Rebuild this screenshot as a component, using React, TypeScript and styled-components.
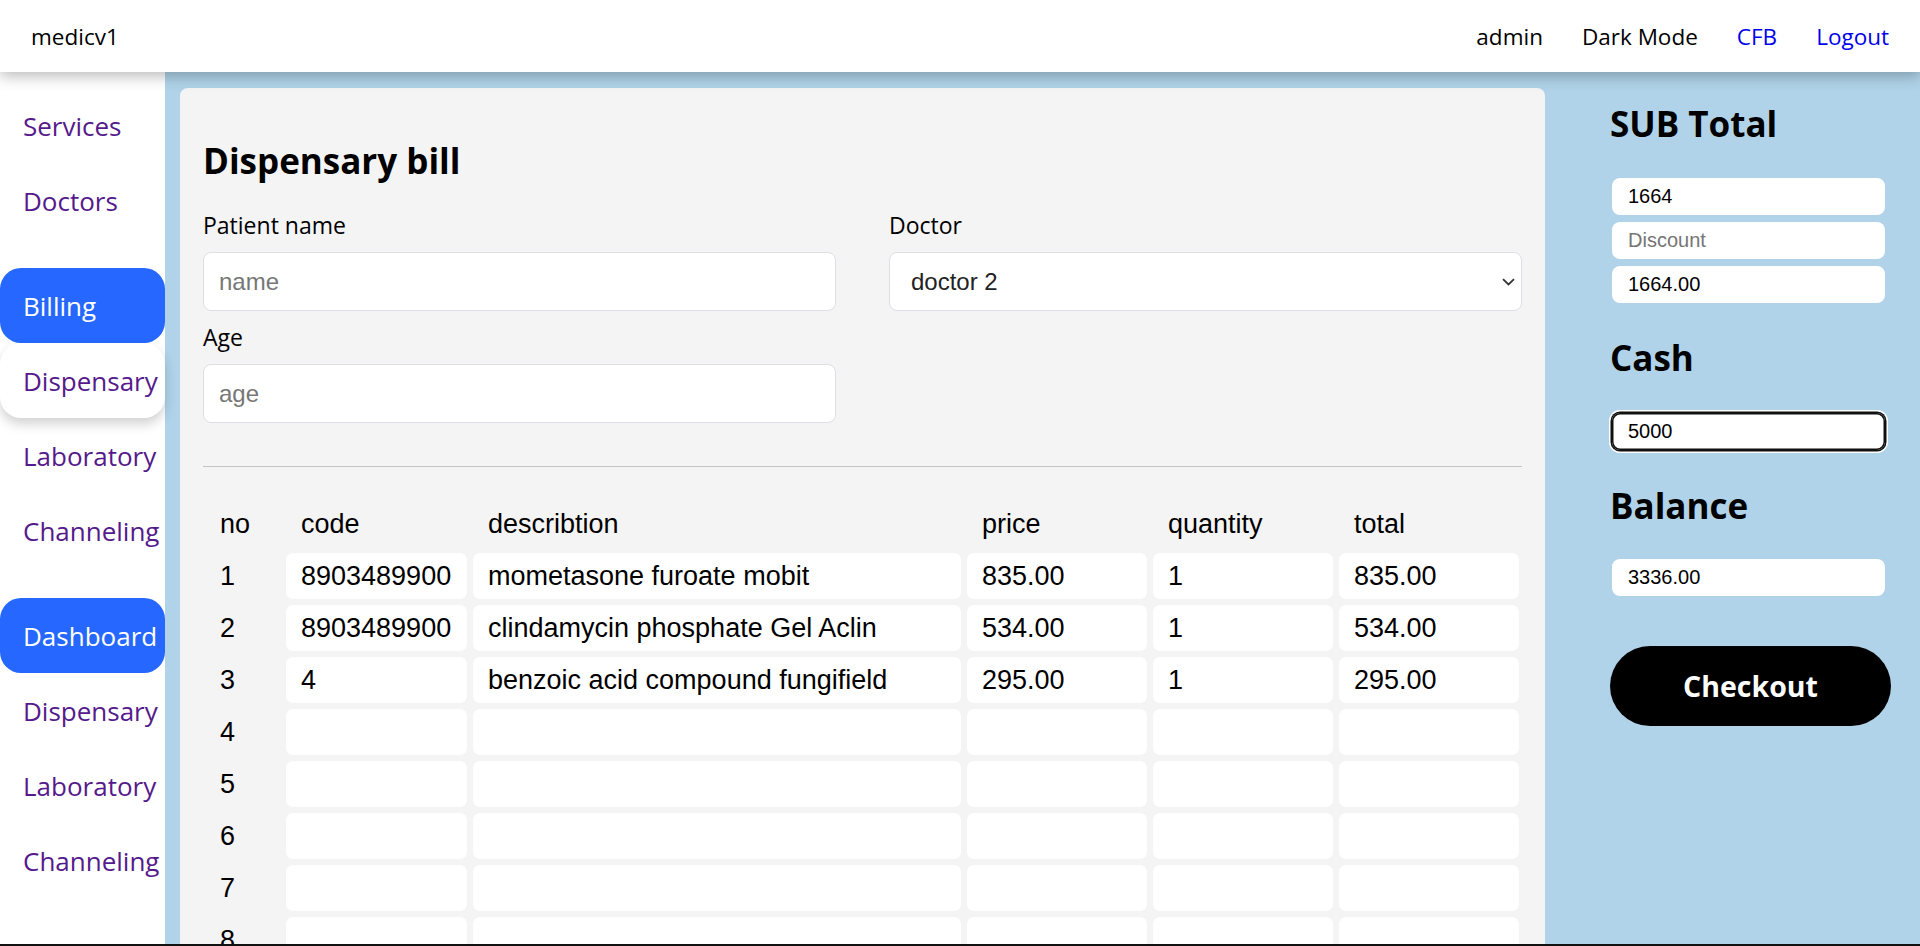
import React from "react";
import styled, { createGlobalStyle, css } from "styled-components";

const GlobalStyle = createGlobalStyle`
  html, body { margin: 0; padding: 0; height: 100%; overflow: hidden; }
  body { font-family: "Open Sans", "Noto Sans", sans-serif; background: #ffffff; color: #000; }
  #root { height: 100%; }
  *, *::before, *::after { box-sizing: border-box; }
`;

const Page = styled.div`
  display: flex;
  flex-direction: column;
  height: 100vh;
`;

const TopBar = styled.header`
  position: relative;
  z-index: 3;
  flex: 0 0 72px;
  height: 72px;
  background: #ffffff;
  display: flex;
  align-items: center;
  justify-content: space-between;
  padding: 0 31px;
  box-shadow: 0 4px 14px rgba(0, 0, 0, 0.28);
`;

const Brand = styled.span`
  font-size: 22.5px;
  color: #000;
`;

const TopLinks = styled.nav`
  display: flex;
  align-items: center;
  gap: 39px;
`;

const TopLink = styled.a<{ $link?: boolean }>`
  font-size: 22.5px;
  text-decoration: none;
  color: ${(p) => (p.$link ? "#0000ee" : "#000")};
  cursor: pointer;
`;

const Body = styled.div`
  flex: 1;
  display: flex;
  min-height: 0;
`;

const Sidebar = styled.aside`
  flex: 0 0 165px;
  background: #ffffff;
  padding-top: 16px;
  display: flex;
  flex-direction: column;
`;

const NavGroup = styled.div<{ $spaced?: boolean }>`
  display: flex;
  flex-direction: column;
  margin-top: ${(p) => (p.$spaced ? "30px" : "0")};
`;

const SideItem = styled.a<{ $variant?: "active" | "raised" }>`
  position: relative;
  height: 75px;
  display: flex;
  align-items: center;
  padding-left: 23px;
  font-size: 26px;
  color: #551a8b;
  text-decoration: none;
  border-radius: 21px;
  white-space: nowrap;
  ${(p) =>
    p.$variant === "active" &&
    css`
      background: #2668ff;
      color: #ffffff;
    `}
  ${(p) =>
    p.$variant === "raised" &&
    css`
      background: #ffffff;
      z-index: 1;
      box-shadow: 0 6px 12px rgba(0, 0, 0, 0.18);
    `}
`;

const Main = styled.main`
  flex: 1;
  display: flex;
  background: #b0d3e9;
  padding: 16px 0 0 15px;
  min-width: 0;
`;

const Panel = styled.section`
  flex: 0 0 1365px;
  background: #f4f4f4;
  border-radius: 8px 8px 0 0;
  padding: 52px 23px 0;
  overflow: hidden;
`;

const Title = styled.h2<{ $mt?: number }>`
  margin: ${(p) => p.$mt ?? 0}px 0 0;
  font-size: 35px;
  line-height: 42px;
  font-weight: 700;
  color: #000;
`;

const FormGrid = styled.div`
  display: grid;
  grid-template-columns: 633px 633px;
  column-gap: 53px;
  row-gap: 12px;
  margin-top: 29px;
`;

const Field = styled.div`
  display: flex;
  flex-direction: column;
`;

const Label = styled.label`
  font-size: 23px;
  line-height: 28px;
  margin-bottom: 13px;
  color: #000;
`;

const TextInput = styled.input`
  height: 59px;
  width: 100%;
  border: 1px solid #dcdfe3;
  border-radius: 8px;
  background: #ffffff;
  padding: 0 15px;
  font-family: "Liberation Sans", Arial, sans-serif;
  font-size: 24px;
  color: #212529;
  outline: none;
  &::placeholder { color: #777777; }
`;

const SelectWrap = styled.div`
  position: relative;
  width: 100%;
`;

const Select = styled.select`
  appearance: none;
  -webkit-appearance: none;
  height: 59px;
  width: 100%;
  border: 1px solid #dcdfe3;
  border-radius: 8px;
  background: #ffffff;
  padding: 0 40px 0 21px;
  font-family: "Liberation Sans", Arial, sans-serif;
  font-size: 24px;
  color: #222222;
  outline: none;
`;

const Chevron = styled.svg`
  position: absolute;
  right: 7px;
  top: 50%;
  width: 13px;
  height: 8px;
  margin-top: -4px;
  pointer-events: none;
`;

const Divider = styled.hr`
  margin: 43px 0 0;
  border: 0;
  border-top: 1px solid #c4c4c4;
`;

const ItemsGrid = styled.div`
  display: grid;
  grid-template-columns: 77px 181px 1fr 180px 180px 180px;
  gap: 6px;
  margin-top: 34px;
  padding-right: 3px;
`;

const HeadCell = styled.div<{ $first?: boolean }>`
  height: 46px;
  display: flex;
  align-items: center;
  padding-left: ${(p) => (p.$first ? "17px" : "15px")};
  font-family: "Liberation Sans", Arial, sans-serif;
  font-size: 27px;
  color: #000;
`;

const CellInput = styled.input`
  height: 46px;
  width: 100%;
  min-width: 0;
  border: 0;
  border-radius: 7px;
  background: #ffffff;
  padding: 0 15px;
  font-family: "Liberation Sans", Arial, sans-serif;
  font-size: 27px;
  color: #000;
  outline: none;
`;

const Summary = styled.aside`
  flex: 1;
  display: flex;
  flex-direction: column;
  align-items: flex-start;
  padding-left: 65px;
`;

const InputStack = styled.div<{ $mt: number }>`
  display: flex;
  flex-direction: column;
  gap: 7px;
  margin-top: ${(p) => p.$mt}px;
`;

const SmallInput = styled.input<{ $focused?: boolean }>`
  width: 273px;
  height: 37px;
  margin-left: 2px;
  border: 0;
  border-radius: 8px;
  background: #ffffff;
  padding: 0 16px;
  font-family: "Liberation Sans", Arial, sans-serif;
  font-size: 20px;
  color: #000;
  outline: none;
  &::placeholder { color: #757575; }
  ${(p) =>
    p.$focused &&
    css`
      box-shadow: inset 0 0 0 1.5px #101010, 0 0 0 1.5px #101010, 0 0 0 3px #ffffff;
    `}
`;

const CheckoutButton = styled.button`
  margin-top: 50px;
  width: 281px;
  height: 80px;
  border: 0;
  border-radius: 40px;
  background: #000;
  color: #fff;
  font-family: "Open Sans", "Noto Sans", sans-serif;
  font-weight: 700;
  font-size: 28.5px;
  cursor: pointer;
`;

const BottomRule = styled.div`
  position: fixed;
  left: 0;
  right: 0;
  bottom: 0;
  height: 2px;
  background: #111;
  z-index: 5;
`;

type Row = { code: string; desc: string; price: string; qty: string; total: string };

const filled: Row[] = [
  { code: "8903489900", desc: "mometasone furoate mobit", price: "835.00", qty: "1", total: "835.00" },
  { code: "8903489900", desc: "clindamycin phosphate Gel Aclin", price: "534.00", qty: "1", total: "534.00" },
  { code: "4", desc: "benzoic acid compound fungifield", price: "295.00", qty: "1", total: "295.00" },
];

const rows: Row[] = Array.from({ length: 10 }, (_, i) =>
  filled[i] ?? { code: "", desc: "", price: "", qty: "", total: "" }
);

export default function App() {
  return (
    <>
      <GlobalStyle />
      <Page>
        <TopBar>
          <Brand>medicv1</Brand>
          <TopLinks>
            <TopLink>admin</TopLink>
            <TopLink>Dark Mode</TopLink>
            <TopLink $link>CFB</TopLink>
            <TopLink $link>Logout</TopLink>
          </TopLinks>
        </TopBar>
        <Body>
          <Sidebar>
            <NavGroup>
              <SideItem>Services</SideItem>
              <SideItem>Doctors</SideItem>
            </NavGroup>
            <NavGroup $spaced>
              <SideItem $variant="active">Billing</SideItem>
              <SideItem $variant="raised">Dispensary</SideItem>
              <SideItem>Laboratory</SideItem>
              <SideItem>Channeling</SideItem>
            </NavGroup>
            <NavGroup $spaced>
              <SideItem $variant="active">Dashboard</SideItem>
              <SideItem>Dispensary</SideItem>
              <SideItem>Laboratory</SideItem>
              <SideItem>Channeling</SideItem>
            </NavGroup>
          </Sidebar>
          <Main>
            <Panel>
              <Title>Dispensary bill</Title>
              <FormGrid>
                <Field>
                  <Label>Patient name</Label>
                  <TextInput placeholder="name" />
                </Field>
                <Field>
                  <Label>Doctor</Label>
                  <SelectWrap>
                    <Select defaultValue="doctor 2">
                      <option>doctor 1</option>
                      <option>doctor 2</option>
                    </Select>
                    <Chevron viewBox="0 0 13 8">
                      <path d="M1 1.2 L6.5 6.5 L12 1.2" fill="none" stroke="#333" strokeWidth="1.8" />
                    </Chevron>
                  </SelectWrap>
                </Field>
                <Field>
                  <Label>Age</Label>
                  <TextInput placeholder="age" />
                </Field>
              </FormGrid>
              <Divider />
              <ItemsGrid>
                <HeadCell $first>no</HeadCell>
                <HeadCell>code</HeadCell>
                <HeadCell>describtion</HeadCell>
                <HeadCell>price</HeadCell>
                <HeadCell>quantity</HeadCell>
                <HeadCell>total</HeadCell>
                {rows.map((r, i) => (
                  <React.Fragment key={i}>
                    <HeadCell $first>{i + 1}</HeadCell>
                    <CellInput readOnly value={r.code} />
                    <CellInput readOnly value={r.desc} />
                    <CellInput readOnly value={r.price} />
                    <CellInput readOnly value={r.qty} />
                    <CellInput readOnly value={r.total} />
                  </React.Fragment>
                ))}
              </ItemsGrid>
            </Panel>
            <Summary>
              <Title $mt={15}>SUB Total</Title>
              <InputStack $mt={33}>
                <SmallInput readOnly value="1664" />
                <SmallInput placeholder="Discount" />
                <SmallInput readOnly value="1664.00" />
              </InputStack>
              <Title $mt={34}>Cash</Title>
              <InputStack $mt={34}>
                <SmallInput $focused readOnly value="5000" />
              </InputStack>
              <Title $mt={35}>Balance</Title>
              <InputStack $mt={32}>
                <SmallInput readOnly value="3336.00" />
              </InputStack>
              <CheckoutButton>Checkout</CheckoutButton>
            </Summary>
          </Main>
        </Body>
        <BottomRule />
      </Page>
    </>
  );
}
